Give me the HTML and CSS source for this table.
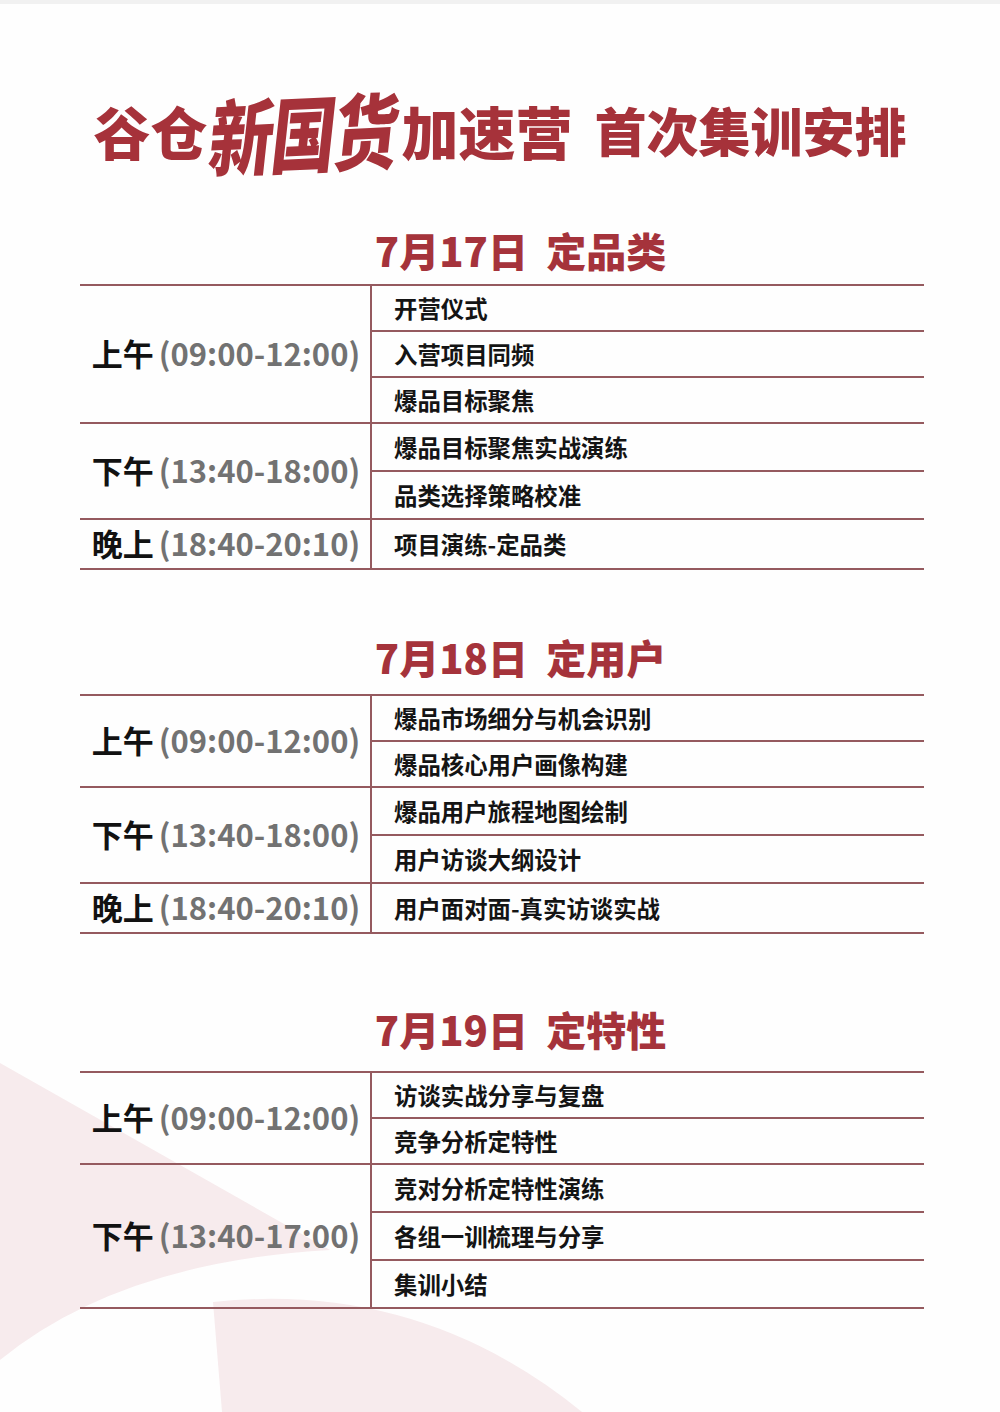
FILE: index.html
```html
<!DOCTYPE html>
<html lang="zh-CN">
<head>
<meta charset="utf-8">
<title>谷仓新国货加速营 首次集训安排</title>
<link rel="stylesheet" href="styles.css">
</head>
<body>
<div class="page">
  <svg class="bg" viewBox="0 0 1000 1412" preserveAspectRatio="none" aria-hidden="true">
    <path d="M0,1063 L330,1250 Q120,1262 0,1360 Z" fill="#f7ebed"/>
    <path d="M213,1302 Q420,1280 582,1412 L222,1412 Z" fill="#f7ebed"/>
  </svg>
  <div class="topstrip"></div>

  <h1 class="title">
    <span class="t-a">谷仓</span><span class="t-brush">新国货</span><span class="t-a">加速营</span><span class="t-b">首次集训安排</span>
  </h1>

  <section class="day day-1">
    <h2 class="day-head">7月17日&nbsp;&nbsp;定品类</h2>
    <div class="table">
      <div class="group am">
        <div class="slot"><b>上午</b><span class="time">(09:00-12:00)</span></div>
        <ul class="items">
          <li>开营仪式</li>
          <li>入营项目同频</li>
          <li>爆品目标聚焦</li>
        </ul>
      </div>
      <div class="group pm">
        <div class="slot"><b>下午</b><span class="time">(13:40-18:00)</span></div>
        <ul class="items">
          <li>爆品目标聚焦实战演练</li>
          <li>品类选择策略校准</li>
        </ul>
      </div>
      <div class="group eve">
        <div class="slot"><b>晚上</b><span class="time">(18:40-20:10)</span></div>
        <ul class="items">
          <li>项目演练-定品类</li>
        </ul>
      </div>
    </div>
  </section>

  <section class="day day-2">
    <h2 class="day-head">7月18日&nbsp;&nbsp;定用户</h2>
    <div class="table">
      <div class="group am">
        <div class="slot"><b>上午</b><span class="time">(09:00-12:00)</span></div>
        <ul class="items">
          <li>爆品市场细分与机会识别</li>
          <li>爆品核心用户画像构建</li>
        </ul>
      </div>
      <div class="group pm">
        <div class="slot"><b>下午</b><span class="time">(13:40-18:00)</span></div>
        <ul class="items">
          <li>爆品用户旅程地图绘制</li>
          <li>用户访谈大纲设计</li>
        </ul>
      </div>
      <div class="group eve">
        <div class="slot"><b>晚上</b><span class="time">(18:40-20:10)</span></div>
        <ul class="items">
          <li>用户面对面-真实访谈实战</li>
        </ul>
      </div>
    </div>
  </section>

  <section class="day day-3">
    <h2 class="day-head">7月19日&nbsp;&nbsp;定特性</h2>
    <div class="table">
      <div class="group am">
        <div class="slot"><b>上午</b><span class="time">(09:00-12:00)</span></div>
        <ul class="items">
          <li>访谈实战分享与复盘</li>
          <li>竞争分析定特性</li>
        </ul>
      </div>
      <div class="group pm">
        <div class="slot"><b>下午</b><span class="time">(13:40-17:00)</span></div>
        <ul class="items">
          <li>竞对分析定特性演练</li>
          <li>各组一训梳理与分享</li>
          <li>集训小结</li>
        </ul>
      </div>
    </div>
  </section>
</div>
</body>
</html>
```

FILE: styles.css
```css
* { box-sizing: border-box; }

html, body {
  margin: 0;
  padding: 0;
  background: #fefefe;
}

body {
  font-family: "Noto Sans CJK SC", "Noto Sans", sans-serif;
  color: #151515;
}

.page {
  position: relative;
  width: 1000px;
  height: 1412px;
  overflow: hidden;
  padding-top: 95px;
}

.bg {
  position: absolute;
  left: 0;
  top: 0;
  width: 1000px;
  height: 1412px;
  z-index: 0;
}

.topstrip {
  position: absolute;
  left: 0;
  top: 0;
  width: 1000px;
  height: 4px;
  background: #f1f1f1;
}

.title,
.day {
  position: relative;
  z-index: 1;
}

.title {
  margin: 0;
  height: 70px;
  line-height: 70px;
  display: flex;
  justify-content: center;
  align-items: center;
  color: #a6323a;
  font-weight: 900;
  white-space: nowrap;
}

.t-a {
  font-size: 57px;
}

.t-brush {
  display: inline-block;
  font-size: 64px;
  letter-spacing: -2px;
  margin: 0 4px;
  transform: scaleY(1.3) skewX(-10deg) rotate(-2deg);
}

.t-b {
  font-size: 52px;
  margin-left: 22px;
}

.day-head {
  margin: 0;
  height: 48px;
  line-height: 48px;
  text-align: center;
  font-size: 40px;
  font-weight: 900;
  color: #a5333b;
  padding-left: 41px;
  white-space: nowrap;
}

.day-1 { margin-top: 61px; }
.day-1 .day-head { margin-bottom: 10px; }
.day-2 { margin-top: 63px; }
.day-2 .day-head { margin-bottom: 13px; }
.day-3 { margin-top: 71px; }
.day-3 .day-head { margin-bottom: 18px; }

.table {
  margin-left: 80px;
  width: 844px;
  border-top: 2px solid #955a5f;
}

.group {
  display: grid;
  grid-template-columns: 292px 1fr;
  border-bottom: 2px solid #955a5f;
}

.slot {
  border-right: 2px solid #955a5f;
  display: flex;
  align-items: center;
  justify-content: center;
  padding-left: 2px;
  padding-bottom: 3px;
  font-size: 31px;
  white-space: nowrap;
}

.slot b {
  font-weight: 700;
  color: #121212;
}

.time {
  font-weight: 700;
  color: #727272;
  margin-left: 5px;
}

.items {
  list-style: none;
  margin: 0;
  padding: 0;
}

.items li {
  height: 46px;
  display: flex;
  align-items: center;
  padding-left: 22px;
  font-size: 23.4px;
  font-weight: 700;
  color: #141414;
  border-bottom: 2px solid #955a5f;
}

.items li:last-child {
  border-bottom: none;
  height: 44px;
}

.pm .items li { height: 48px; }
.pm .items li:last-child { height: 46px; }

.eve .items li:last-child { height: 48px; }
```
